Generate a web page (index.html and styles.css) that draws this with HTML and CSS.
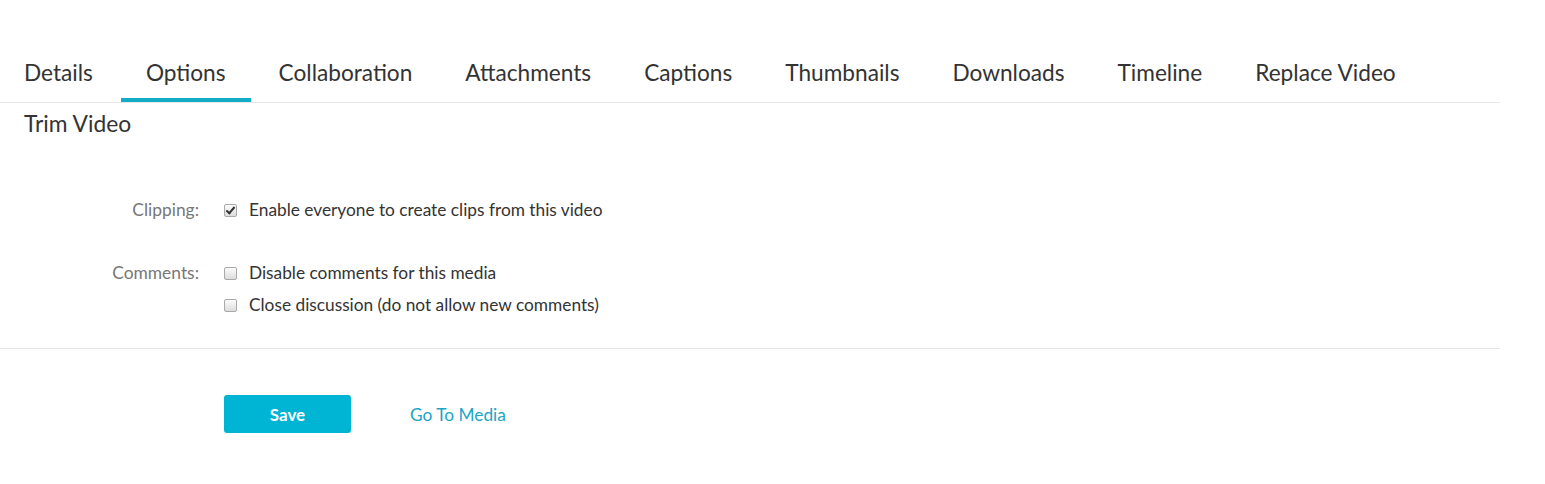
FILE: index.html
```html
<!DOCTYPE html>
<html lang="en">

<head>
    <meta charset="UTF-8">
    <title>Options</title>
    <link rel="stylesheet" href="styles.css">
</head>

<body>
    <div class="page">
        <ul class="tabs">
            <li>Details</li>
            <li class="active">Options</li>
            <li>Collaboration</li>
            <li>Attachments</li>
            <li>Captions</li>
            <li>Thumbnails</li>
            <li>Downloads</li>
            <li>Timeline</li>
            <li>Replace Video</li>
        </ul>

        <h2 class="section-title">Trim Video</h2>

        <form class="options">
            <div class="row">
                <div class="label">Clipping:</div>
                <div class="controls">
                    <label class="check"><input type="checkbox" checked> Enable everyone to create clips from this video</label>
                </div>
            </div>

            <div class="row">
                <div class="label">Comments:</div>
                <div class="controls">
                    <label class="check"><input type="checkbox"> Disable comments for this media</label>
                    <label class="check"><input type="checkbox"> Close discussion (do not allow new comments)</label>
                </div>
            </div>

            <div class="actions">
                <button type="button" class="save">Save</button>
                <a href="#" class="link">Go To Media</a>
            </div>
        </form>
    </div>
</body>

</html>
```

FILE: styles.css
```css
* {
    margin: 0;
    padding: 0;
    box-sizing: border-box;
}

body {
    font-family: Lato, "Open Sans", sans-serif;
    color: #333;
    background: #fff;
}

.page {
    width: 1500px;
    padding-top: 48px;
}

.tabs {
    list-style: none;
    display: flex;
    gap: 3px;
    margin-left: -1px;
    border-bottom: 1px solid #e8e8e8;
}

.tabs li {
    padding: 0 25px;
    font-size: 22.65px;
    line-height: 50px;
    color: #333;
    border-bottom: 4px solid transparent;
}

.tabs li.active {
    border-bottom-color: #13acc6;
}

.section-title {
    font-size: 22.8px;
    font-weight: 400;
    padding: 6px 24px 0;
    line-height: 28px;
}

.options {
    padding-top: 57px;
}

.row {
    display: flex;
}

.row + .row {
    margin-top: 31px;
}

.label {
    width: 199px;
    text-align: right;
    font-size: 17.4px;
    line-height: 32px;
    color: #777;
}

.controls {
    display: flex;
    flex-direction: column;
    padding-left: 25px;
}

.check {
    font-size: 17.3px;
    line-height: 32px;
    display: flex;
    align-items: center;
}

.check input {
    appearance: none;
    -webkit-appearance: none;
    width: 13px;
    height: 13px;
    margin: 0 12px 0 0;
    border: 1px solid #a9a9a9;
    border-radius: 2px;
    background: linear-gradient(#fcfcfc, #dcdcdc);
    position: relative;
}

.check input:checked::after {
    content: "";
    position: absolute;
    left: 3px;
    top: 0px;
    width: 3px;
    height: 7px;
    border: solid #333;
    border-width: 0 2px 2px 0;
    transform: rotate(40deg);
}

.actions {
    border-top: 1px solid #e5e5e5;
    padding: 46px 0 0 224px;
    display: flex;
    align-items: center;
    gap: 59px;
    margin-top: 27px;
}

.save {
    width: 127px;
    height: 38px;
    background: #00b4d3;
    color: #fff;
    border: none;
    border-radius: 3px;
    font-family: Lato, sans-serif;
    font-weight: 700;
    font-size: 17px;
}

.link {
    color: #1aa5c6;
    text-decoration: none;
    font-size: 17.3px;
}
```
